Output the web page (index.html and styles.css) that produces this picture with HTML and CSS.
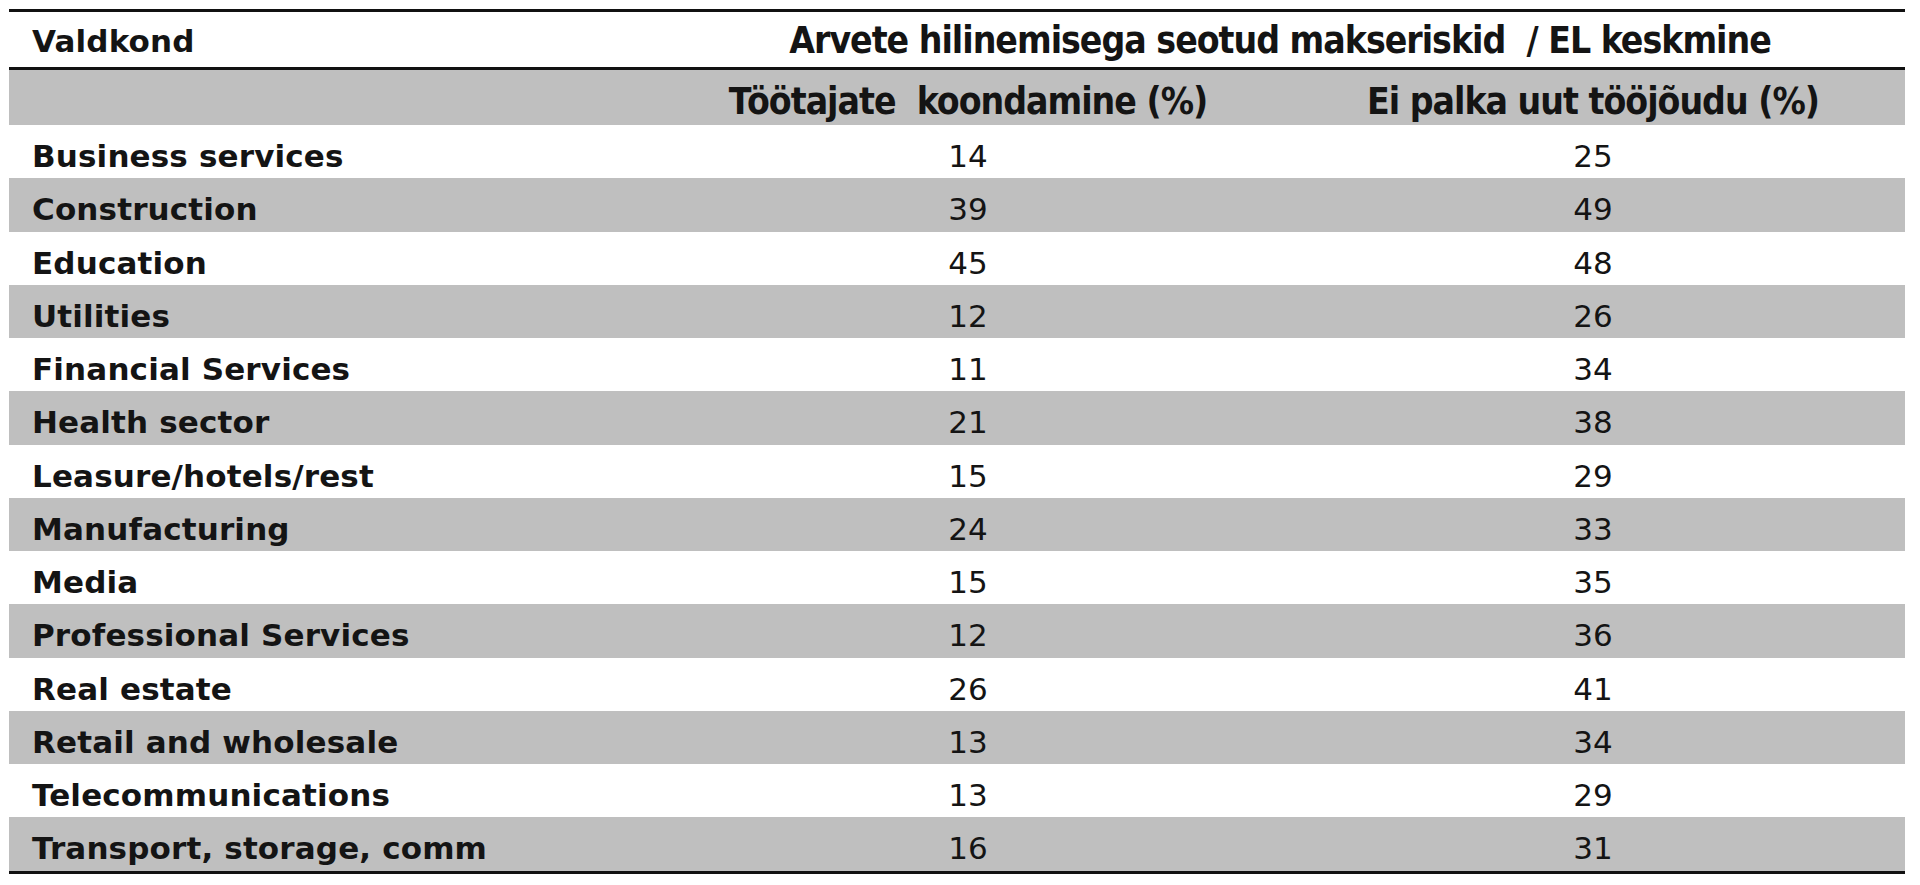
FILE: index.html
```html
<!DOCTYPE html>
<html lang="et">
<head>
<meta charset="utf-8">
<title>Valdkond</title>
<link rel="stylesheet" href="styles.css">
</head>
<body>
<div class="sheet">
  <div class="row head">
    <div class="cell label">Valdkond</div>
    <div class="cell span hdr">Arvete hilinemisega seotud makseriskid&nbsp; / EL keskmine</div>
  </div>
  <div class="row sub">
    <div class="cell label"></div>
    <div class="cell num hdr">Töötajate&nbsp; koondamine (%)</div>
    <div class="cell num hdr">Ei palka uut tööjõudu (%)</div>
  </div>
  <div class="row"><div class="cell label">Business services</div><div class="cell num">14</div><div class="cell num">25</div></div>
  <div class="row alt"><div class="cell label">Construction</div><div class="cell num">39</div><div class="cell num">49</div></div>
  <div class="row"><div class="cell label">Education</div><div class="cell num">45</div><div class="cell num">48</div></div>
  <div class="row alt"><div class="cell label">Utilities</div><div class="cell num">12</div><div class="cell num">26</div></div>
  <div class="row"><div class="cell label">Financial Services</div><div class="cell num">11</div><div class="cell num">34</div></div>
  <div class="row alt"><div class="cell label">Health sector</div><div class="cell num">21</div><div class="cell num">38</div></div>
  <div class="row"><div class="cell label">Leasure/hotels/rest</div><div class="cell num">15</div><div class="cell num">29</div></div>
  <div class="row alt"><div class="cell label">Manufacturing</div><div class="cell num">24</div><div class="cell num">33</div></div>
  <div class="row"><div class="cell label">Media</div><div class="cell num">15</div><div class="cell num">35</div></div>
  <div class="row alt"><div class="cell label">Professional Services</div><div class="cell num">12</div><div class="cell num">36</div></div>
  <div class="row"><div class="cell label">Real estate</div><div class="cell num">26</div><div class="cell num">41</div></div>
  <div class="row alt"><div class="cell label">Retail and wholesale</div><div class="cell num">13</div><div class="cell num">34</div></div>
  <div class="row"><div class="cell label">Telecommunications</div><div class="cell num">13</div><div class="cell num">29</div></div>
  <div class="row alt"><div class="cell label">Transport, storage, comm</div><div class="cell num">16</div><div class="cell num">31</div></div>
</div>
</body>
</html>
```
FILE: styles.css
```css
html, body {
  margin: 0;
  padding: 0;
  background: #ffffff;
}

body {
  color: #141414;
  font-family: "DejaVu Sans", sans-serif;
}

.sheet {
  margin: 9px 0 0 9px;
  width: 1896px;
  border-top: 3px solid #111;
  border-bottom: 3px solid #111;
}

.row {
  display: grid;
  grid-template-columns: 646px 626px 624px;
  height: 53.25px;
}

.row.head {
  height: 55px;
  border-bottom: 3px solid #111;
}

.row.sub {
  height: 55px;
  background: #bfbfbf;
}

.row.alt {
  background: #bfbfbf;
}

.cell {
  display: flex;
  align-items: center;
  box-sizing: border-box;
  padding-top: 9px;
  white-space: nowrap;
}

.label {
  padding-left: 23px;
  font-weight: bold;
  font-size: 31px;
  letter-spacing: 0.15px;
}

.head .label {
  padding-top: 2px;
}

.num {
  justify-content: center;
  font-size: 31px;
}

.span {
  grid-column: 2 / 4;
  justify-content: center;
}

.hdr {
  font-family: "DejaVu Sans Condensed", "DejaVu Sans", sans-serif;
  font-stretch: condensed;
  font-weight: bold;
  font-size: 37px;
  letter-spacing: -1px;
}

.head .hdr {
  padding-top: 2px;
}

.sub .hdr {
  padding-top: 8px;
}
```
